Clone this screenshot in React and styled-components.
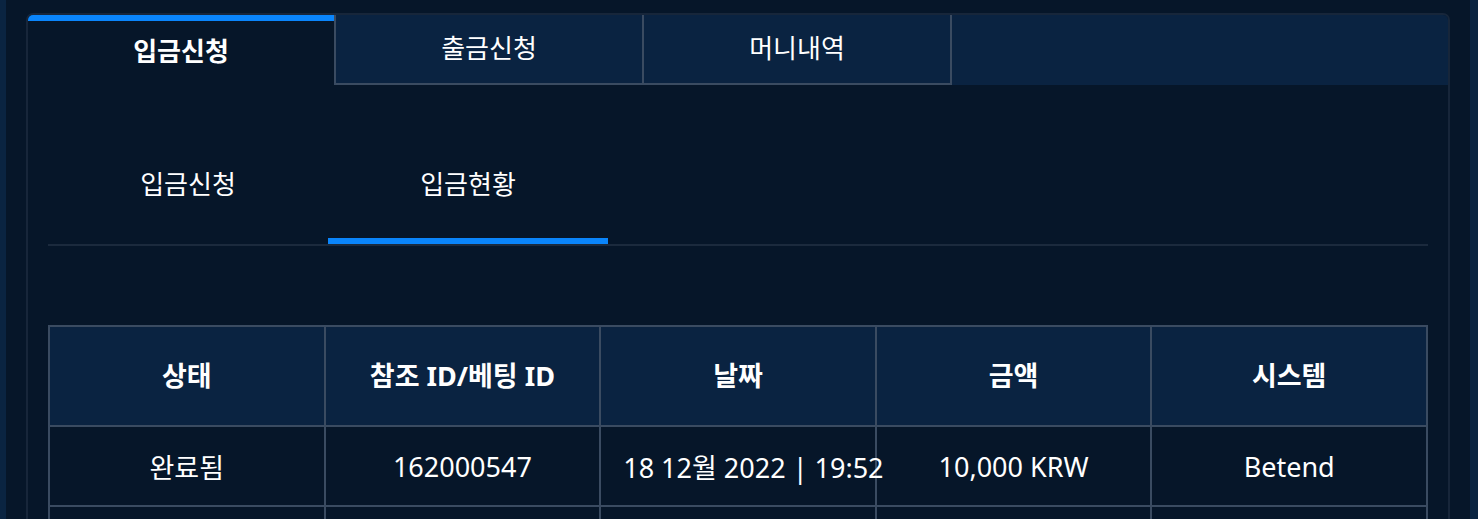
import React from "react";
import styled, { createGlobalStyle } from "styled-components";

const GlobalStyle = createGlobalStyle`
  html, body {
    margin: 0;
    padding: 0;
    background: #061629;
    overflow: hidden;
  }
  body {
    font-family: "Noto Sans", "Noto Sans CJK KR", sans-serif;
    color: #ffffff;
  }
`;

const Page = styled.div`
  display: flex;
  width: 1478px;
  height: 519px;
  overflow: hidden;
  background: #061629;
`;

const SideStrip = styled.div`
  flex: 0 0 ${(p) => p.$w}px;
  background: #0a2441;
`;

const Main = styled.main`
  flex: 1;
  padding: 13px 20px 0 20px;
  min-width: 0;
`;

const Card = styled.section`
  border: 2px solid #17263a;
  border-bottom: none;
  border-radius: 7px 7px 0 0;
  background: #061629;
  overflow: hidden;
  height: 600px;
`;

const TabBar = styled.div`
  display: flex;
  background: #0a2341;
  height: 70px;
`;

const Tab = styled.button`
  all: unset;
  box-sizing: border-box;
  display: flex;
  align-items: center;
  justify-content: center;
  width: ${(p) => (p.$active ? 306 : p.$last ? 310 : 308)}px;
  height: 70px;
  font-family: "Noto Sans", "Noto Sans CJK KR", sans-serif;
  font-size: 26px;
  color: #ffffff;
  font-weight: ${(p) => (p.$active ? 700 : 400)};
  background: ${(p) => (p.$active ? "#061629" : "#0a2341")};
  border-top: ${(p) => (p.$active ? "6px solid #0a85fb" : "none")};
  border-left: ${(p) => (p.$active ? "none" : "2px solid #3a4b61")};
  border-right: ${(p) => (p.$last ? "2px solid #3a4b61" : "none")};
  border-bottom: ${(p) => (p.$active ? "none" : "2px solid #3a4b61")};
  padding-bottom: ${(p) => (p.$active ? 6 : 4)}px;
`;

const Body = styled.div`
  padding: 0 20px;
`;

const SubTabs = styled.div`
  display: flex;
  height: 161px;
  border-bottom: 2px solid #1b2a3d;
  box-sizing: border-box;
`;

const SubTab = styled.button`
  all: unset;
  box-sizing: border-box;
  width: 280px;
  height: 159px;
  display: flex;
  align-items: center;
  justify-content: center;
  padding-top: 42px;
  font-family: "Noto Sans", "Noto Sans CJK KR", sans-serif;
  font-size: 26px;
  color: #ffffff;
  border-bottom: 6px solid ${(p) => (p.$active ? "#0a85fb" : "transparent")};
`;

const Table = styled.table`
  margin-top: 79px;
  width: 100%;
  border-collapse: collapse;
  table-layout: fixed;
  border: 2px solid #3a4b61;
`;

const Th = styled.th`
  height: 95px;
  padding: 0 22px 3px;
  background: #0a2341;
  border: 2px solid #3a4b61;
  font-size: 27px;
  font-weight: 700;
  text-align: center;
  white-space: nowrap;
`;

const Td = styled.td`
  height: 77px;
  padding: 1px 22px 0;
  border: 2px solid #3a4b61;
  font-size: 27px;
  font-weight: 400;
  text-align: center;
  white-space: nowrap;
  color: #ffffff;
`;

const headers = ["상태", "참조 ID/베팅 ID", "날짜", "금액", "시스템"];
const rows = [
  ["완료됨", "162000547", "18 12월 2022 | 19:52", "10,000 KRW", "Betend"],
  ["", "", "", "", ""],
];

export default function App() {
  return (
    <>
      <GlobalStyle />
      <Page>
        <SideStrip $w={6} />
        <Main>
          <Card>
            <TabBar>
              <Tab $active>입금신청</Tab>
              <Tab>출금신청</Tab>
              <Tab $last>머니내역</Tab>
            </TabBar>
            <Body>
              <SubTabs>
                <SubTab>입금신청</SubTab>
                <SubTab $active>입금현황</SubTab>
              </SubTabs>
              <Table>
                <thead>
                  <tr>
                    {headers.map((h) => (
                      <Th key={h}>{h}</Th>
                    ))}
                  </tr>
                </thead>
                <tbody>
                  {rows.map((r, i) => (
                    <tr key={i}>
                      {r.map((c, j) => (
                        <Td key={j}>{c}</Td>
                      ))}
                    </tr>
                  ))}
                </tbody>
              </Table>
            </Body>
          </Card>
        </Main>
        <SideStrip $w={8} />
      </Page>
    </>
  );
}
